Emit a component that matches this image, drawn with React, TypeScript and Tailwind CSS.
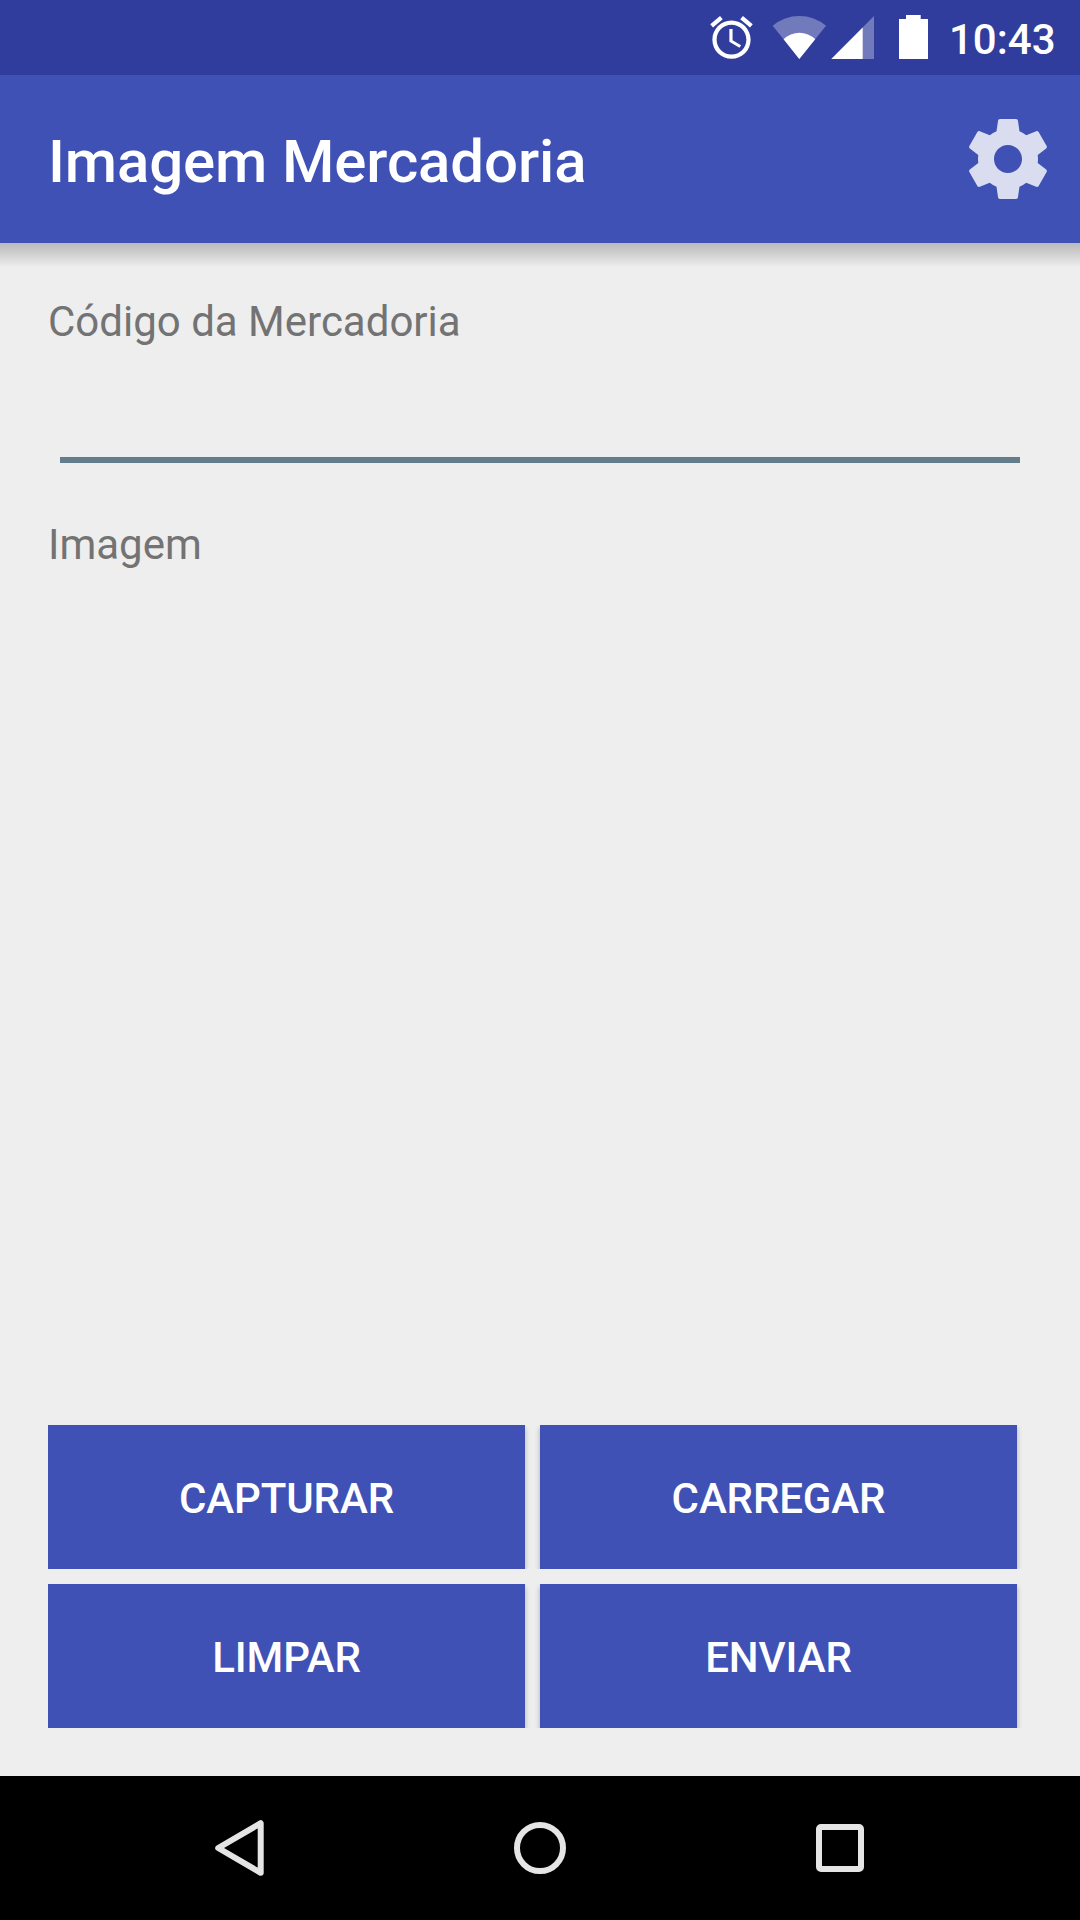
import type { ReactNode } from 'react';

function StatusBar() {
  return (
    <div className="flex h-[75px] shrink-0 items-start justify-end bg-[#303d9d] pr-6 text-white">
      <svg className="mt-3 h-[51px] w-[51px]" viewBox="0 0 24 24" fill="currentColor">
        <path d="M22 5.72l-4.6-3.86-1.29 1.53 4.6 3.86L22 5.72zM7.88 3.39L6.6 1.86 2 5.71l1.29 1.53 4.59-3.85zM12.5 8H11v6l4.75 2.85.75-1.23-4-2.37V8zM12 4c-4.97 0-9 4.03-9 9s4.02 9 9 9c4.97 0 9-4.03 9-9s-4.03-9-9-9zm0 16c-3.87 0-7-3.13-7-7s3.13-7 7-7 7 3.13 7 7-3.13 7-7 7z" />
      </svg>
      <svg className="mt-[15px] ml-[14px] h-[45px] w-[56px]" viewBox="0 0 56 45">
        <path d="M28.3 44L1.7 10.7A41.5 41.5 0 0 1 55 10.7Z" fill="#717bbb" />
        <path d="M28.3 44L12.6 24.3A22.5 22.5 0 0 1 44.2 24.3Z" fill="currentColor" />
      </svg>
      <svg className="mt-[15px] ml-1 h-[45px] w-[43px]" viewBox="0 0 43 45">
        <path d="M.3 44L43 1V44Z" fill="#717bbb" />
        <path d="M.3 44L31.7 12.4V44Z" fill="currentColor" />
      </svg>
      <svg className="mt-[15px] ml-[25px] h-11 w-[29px]" viewBox="0 0 29 44">
        <path d="M0 4H7V0H21.7V4H29V44H0Z" fill="currentColor" />
      </svg>
      <span className="mt-[15px] ml-[21px] w-[107px] text-[42px] leading-[49px] font-medium whitespace-nowrap">10:43</span>
    </div>
  );
}

function AppBar() {
  return (
    <header className="flex h-[168px] shrink-0 items-center justify-between bg-[#3f51b5] pr-6 pl-12 text-white">
      <h1 className="mt-1.5 text-[60px] leading-[70px] font-medium tracking-[-0.13px]">Imagem Mercadoria</h1>
      <button type="button" aria-label="Configurações">
        <svg className="h-24 w-24" viewBox="0 0 24 24" fill="#dadcf0">
          <path d="M19.43 12.98c.04-.32.07-.64.07-.98s-.03-.66-.07-.98l2.11-1.65c.19-.15.24-.42.12-.64l-2-3.46c-.12-.22-.39-.3-.61-.22l-2.49 1c-.52-.4-1.08-.73-1.69-.98l-.38-2.65C14.46 2.18 14.25 2 14 2h-4c-.25 0-.46.18-.49.42l-.38 2.65c-.61.25-1.17.59-1.69.98l-2.49-1c-.23-.09-.49 0-.61.22l-2 3.46c-.13.22-.07.49.12.64l2.11 1.65c-.04.32-.07.65-.07.98s.03.66.07.98l-2.11 1.65c-.19.15-.24.42-.12.64l2 3.46c.12.22.39.3.61.22l2.49-1c.52.4 1.08.73 1.69.98l.38 2.65c.03.24.24.42.49.42h4c.25 0 .46-.18.49-.42l.38-2.65c.61-.25 1.17-.59 1.69-.98l2.49 1c.23.09.49 0 .61-.22l2-3.46c.12-.22.07-.49-.12-.64l-2.11-1.65zM12 15.5c-1.93 0-3.5-1.57-3.5-3.5s1.57-3.5 3.5-3.5 3.5 1.57 3.5 3.5-1.57 3.5-3.5 3.5z" />
        </svg>
      </button>
    </header>
  );
}

function ActionButton({ children }: { children: ReactNode }) {
  return (
    <button
      type="button"
      className="flex h-36 items-center justify-center bg-[#3f51b5] pt-[3px] text-[42px] leading-[49px] font-medium tracking-[-0.12px] text-white shadow-[0_3px_5px_rgba(0,0,0,0.28)]"
    >
      {children}
    </button>
  );
}

// Each row clips its buttons' shadows at the top, bottom and left edges.
function ButtonRow({ children }: { children: ReactNode }) {
  return (
    <div className="grid grid-cols-2 gap-[15px] [clip-path:inset(0_-12px_0_0)]">{children}</div>
  );
}

function NavBar() {
  return (
    <nav className="flex h-36 shrink-0 items-center justify-center gap-[228px] bg-black">
      <svg className="h-[72px] w-[72px]" viewBox="0 0 72 72" fill="none" stroke="#e5e5e5" strokeWidth="6" strokeLinejoin="round">
        <path d="M14.2 36L56.7 11.2V60.8Z" />
      </svg>
      <svg className="h-[72px] w-[72px]" viewBox="0 0 72 72" fill="none" stroke="#e5e5e5" strokeWidth="6">
        <circle cx="36" cy="36" r="23" />
      </svg>
      <svg className="h-[72px] w-[72px]" viewBox="0 0 72 72" fill="none" stroke="#e5e5e5" strokeWidth="6">
        <rect x="15" y="15" width="42" height="42" rx="2" />
      </svg>
    </nav>
  );
}

export default function App() {
  return (
    <div className="flex h-[1920px] w-[1080px] flex-col overflow-hidden bg-[#eeeeee] font-['Roboto',sans-serif]">
      <StatusBar />
      <AppBar />
      <div className="h-6 shrink-0 bg-linear-to-b from-[#bababa] via-[#d0d0d0] via-45% to-[#eeeeee]" />
      <main className="flex flex-1 flex-col px-12 pb-12 text-[42px] leading-[49px] text-[#737373]">
        <label htmlFor="codigo" className="mt-[30px]">Código da Mercadoria</label>
        <input
          id="codigo"
          className="mx-3 mt-[17px] h-[100px] border-b-6 border-[#647d8a] bg-transparent outline-none"
        />
        <p className="mt-[57px]">Imagem</p>
        <div className="mt-auto flex w-[969px] flex-col gap-[15px]">
          <ButtonRow>
            <ActionButton>CAPTURAR</ActionButton>
            <ActionButton>CARREGAR</ActionButton>
          </ButtonRow>
          <ButtonRow>
            <ActionButton>LIMPAR</ActionButton>
            <ActionButton>ENVIAR</ActionButton>
          </ButtonRow>
        </div>
      </main>
      <NavBar />
    </div>
  );
}
